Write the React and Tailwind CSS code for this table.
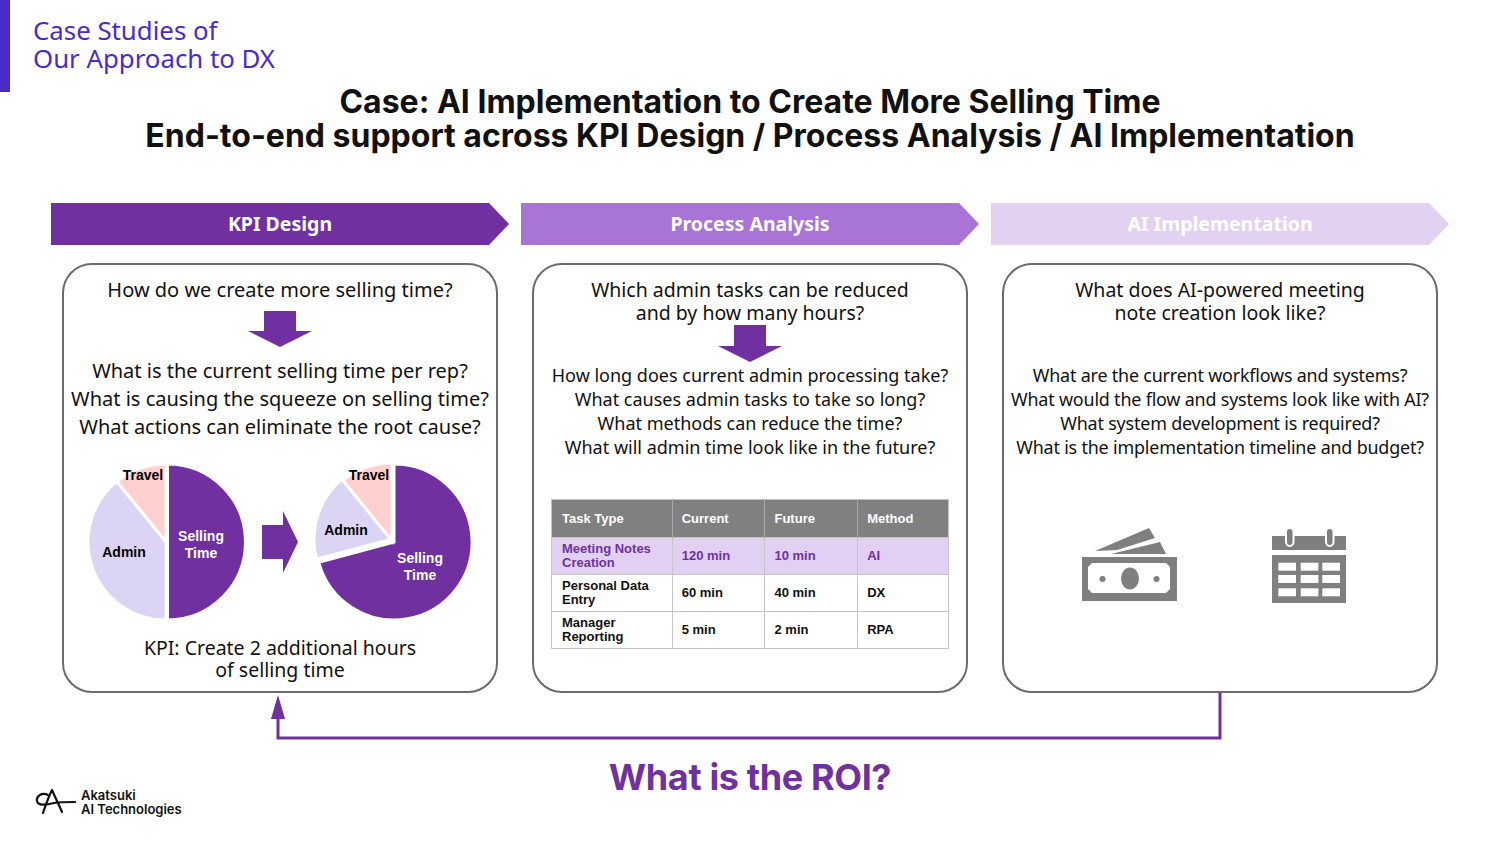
/**
 * Case study slide: KPI Design / Process Analysis / AI Implementation
 */
const rows = [
  { task: 'Meeting Notes Creation', current: '120 min', future: '10 min', method: 'AI', hl: true },
  { task: 'Personal Data Entry', current: '60 min', future: '40 min', method: 'DX' },
  { task: 'Manager Reporting', current: '5 min', future: '2 min', method: 'RPA' },
]

const DownArrow = ({ h = 36 }) => (
  <svg width="64" height={h} viewBox={`0 0 64 ${h}`} className="mx-auto block">
    <polygon points={`16,0 48,0 48,${h - 16} 64,${h - 16} 32,${h} 0,${h - 16} 16,${h - 16}`} fill="#7030a0" />
  </svg>
)

const Chevron = ({ label, className }) => (
  <div
    className={`h-[42px] w-[458px] flex items-center justify-center text-white font-bold text-[19.5px] font-['Noto_Sans',sans-serif] [clip-path:polygon(0_0,calc(100%_-_20px)_0,100%_50%,calc(100%_-_20px)_100%,0_100%)] ${className}`}
  >
    {label}
  </div>
)

const Label = ({ x, y, fill = '#000', children }) => (
  <text
    x={x}
    y={y}
    fill={fill}
    textAnchor="middle"
    dominantBaseline="central"
    fontFamily="'Liberation Sans', Arial, sans-serif"
    fontWeight="700"
    fontSize="14"
  >
    {children}
  </text>
)

const PieBefore = () => (
  <svg width="160" height="160" viewBox="0 0 160 160">
    <path d="M80 80 L80 2 A78 78 0 0 1 80 158 Z" fill="#7030a0" stroke="#fff" strokeWidth="3" transform="translate(1.5 0)" />
    <path d="M80 80 L80 158 A78 78 0 0 1 30.9 19.4 Z" fill="#dcd4f4" stroke="#fff" strokeWidth="3" />
    <path d="M80 80 L30.9 19.4 A78 78 0 0 1 80 2 Z" fill="#ffd0cf" stroke="#fff" strokeWidth="3" />
    <Label x={57} y={13}>Travel</Label>
    <Label x={115} y={74} fill="#fff">Selling</Label>
    <Label x={115} y={91} fill="#fff">Time</Label>
    <Label x={38} y={90}>Admin</Label>
  </svg>
)

const PieAfter = () => (
  <svg width="160" height="160" viewBox="0 0 160 160">
    <path d="M80 80 L80 2 A78 78 0 1 1 4.7 100.2 Z" fill="#7030a0" stroke="#fff" strokeWidth="3" />
    <path d="M80 80 L4.7 100.2 A78 78 0 0 1 30.9 19.4 Z" fill="#dcd4f4" stroke="#fff" strokeWidth="3" transform="translate(-2 -3)" />
    <path d="M80 80 L30.9 19.4 A78 78 0 0 1 80 2 Z" fill="#ffd0cf" stroke="#fff" strokeWidth="3" transform="translate(-2 -1)" />
    <Label x={55} y={13}>Travel</Label>
    <Label x={32} y={68}>Admin</Label>
    <Label x={106} y={96} fill="#fff">Selling</Label>
    <Label x={106} y={113} fill="#fff">Time</Label>
  </svg>
)

const RightArrow = () => (
  <svg width="36" height="62" viewBox="0 0 36 62">
    <polygon points="0,14 21,14 21,0 36,31 21,62 21,48 0,48" fill="#7030a0" />
  </svg>
)

const MoneyIcon = () => (
  <svg width="96" height="76" viewBox="0 0 96 76">
    <polygon points="14,24 68,1 74,11 36,23" fill="#7f7f7f" />
    <polygon points="30,27 79,15 85,27" fill="#7f7f7f" />
    <rect x="1" y="30" width="95" height="44" fill="#7f7f7f" />
    <polygon points="11,36 85,36 89,40 89,62 85,66 11,66 7,62 7,40" fill="#fff" />
    <ellipse cx="49" cy="51.5" rx="9" ry="11" fill="#7f7f7f" />
    <circle cx="21.5" cy="52" r="3" fill="#7f7f7f" />
    <circle cx="75.5" cy="52" r="3" fill="#7f7f7f" />
  </svg>
)

const CalendarIcon = () => (
  <svg width="74" height="76" viewBox="0 0 74 76">
    <rect x="0" y="9" width="74" height="14" fill="#7f7f7f" />
    <rect x="0" y="28" width="74" height="48" fill="#7f7f7f" />
    <rect x="14" y="1" width="7.5" height="18" rx="3.75" fill="#7f7f7f" stroke="#fff" strokeWidth="2" />
    <rect x="54" y="1" width="7.5" height="18" rx="3.75" fill="#7f7f7f" stroke="#fff" strokeWidth="2" />
    {[6.3, 28.7, 50.3].map((x) =>
      [35.7, 48, 61.3].map((y) => <rect key={`${x}-${y}`} x={x} y={y} width="17.7" height="8" fill="#fff" />),
    )}
  </svg>
)

const Logo = () => (
  <div className="flex items-center gap-[5px]">
    <svg width="42" height="28" viewBox="0 0 42 28" fill="none" stroke="#111" strokeWidth="2.2" strokeLinecap="round" strokeLinejoin="round">
      <path d="M9 25 C12 16 15 8 18 2 C21 9 25 17 28 24" />
      <path d="M14 7 C8 4 2 8 3 13 C4 18 12 17 20 15 C26 14 32 14 41 14" />
    </svg>
    <div className="font-['Inter',sans-serif] font-semibold text-[13px] leading-[14px] text-[#111]">
      <div>Akatsuki</div>
      <div>AI Technologies</div>
    </div>
  </div>
)

const Card = ({ children }) => (
  <div className="w-[436px] h-[430px] rounded-[30px] border-2 border-[#6b6b6b] bg-white flex flex-col items-center text-center text-[#111] font-['Noto_Sans',sans-serif]">
    {children}
  </div>
)

export default function App() {
  return (
    <div className="w-[1500px] h-[844px] bg-white overflow-hidden flex flex-col">
      {/* header */}
      <div className="flex h-[92px]">
        <div className="w-[10px] h-[92px] bg-[#4b2bc8]" />
        <div className="ml-[23px] pt-[16px] text-[25.8px] leading-[28px] text-[#4b2bc8] font-['Noto_Sans',sans-serif]">
          <div>Case Studies of</div>
          <div>Our Approach to DX</div>
        </div>
      </div>

      <div className="-mt-[7px] text-center font-['Inter',sans-serif] font-bold text-[32px] leading-[34px] text-[#111]">
        <div>Case: AI Implementation to Create More Selling Time</div>
        <div>End-to-end support across KPI Design / Process Analysis / AI Implementation</div>
      </div>

      {/* phase chevrons */}
      <div className="mt-[50px] pl-[51px] flex gap-[12px]">
        <Chevron label="KPI Design" className="bg-[#7030a0]" />
        <Chevron label="Process Analysis" className="bg-[#a874d6]" />
        <Chevron label="AI Implementation" className="bg-[#e2d1f1]" />
      </div>

      {/* cards */}
      <div className="mt-[18px] pl-[62px] flex gap-[34px]">
        <Card>
          <div className="pt-[13px] text-[20px] leading-[24px]">How do we create more selling time?</div>
          <div className="mt-[9px]">
            <DownArrow />
          </div>
          <div className="mt-[10px] text-[20px] leading-[28px]">
            <div>What is the current selling time per rep?</div>
            <div>What is causing the squeeze on selling time?</div>
            <div>What actions can eliminate the root cause?</div>
          </div>
          <div className="mt-[21px] flex items-center gap-[16px]">
            <PieBefore />
            <RightArrow />
            <PieAfter />
          </div>
          <div className="mt-[15px] text-[19.5px] leading-[22px]">
            <div>KPI: Create 2 additional hours</div>
            <div>of selling time</div>
          </div>
        </Card>

        <Card>
          <div className="pt-[13px] text-[19.5px] leading-[23px]">
            <div>Which admin tasks can be reduced</div>
            <div>and by how many hours?</div>
          </div>
          <div className="mt-[1px]">
            <DownArrow h={37} />
          </div>
          <div className="mt-[1px] text-[18px] leading-[24px]">
            <div>How long does current admin processing take?</div>
            <div>What causes admin tasks to take so long?</div>
            <div>What methods can reduce the time?</div>
            <div>What will admin time look like in the future?</div>
          </div>
          <table className="mt-[40px] w-[398px] border-collapse border border-[#c4c4c4] text-left font-['Liberation_Sans',Arial,sans-serif] font-bold text-[13px] leading-[14px]">
            <thead>
              <tr className="h-[38px] bg-[#808080] text-white">
                <th className="w-[121px] pl-[10px] border-r border-[#a9a9a9]">Task Type</th>
                <th className="w-[93px] pl-[9px] border-r border-[#a9a9a9]">Current</th>
                <th className="w-[93px] pl-[9px] border-r border-[#a9a9a9]">Future</th>
                <th className="w-[91px] pl-[9px]">Method</th>
              </tr>
            </thead>
            <tbody>
              {rows.map((r) => (
                <tr key={r.task} className={`h-[37px] border-t border-[#c4c4c4] ${r.hl ? 'bg-[#e2d0f2] text-[#7030a0]' : 'bg-white text-[#111]'}`}>
                  <td className="pl-[10px] pr-[6px] border-r border-[#c4c4c4]">{r.task}</td>
                  <td className="pl-[9px] border-r border-[#c4c4c4]">{r.current}</td>
                  <td className="pl-[9px] border-r border-[#c4c4c4]">{r.future}</td>
                  <td className="pl-[9px]">{r.method}</td>
                </tr>
              ))}
            </tbody>
          </table>
        </Card>

        <Card>
          <div className="pt-[13px] text-[19.5px] leading-[23px]">
            <div>What does AI-powered meeting</div>
            <div>note creation look like?</div>
          </div>
          <div className="mt-[39px] text-[17.9px] leading-[24px] tracking-[-0.01em]">
            <div>What are the current workflows and systems?</div>
            <div>What would the flow and systems look like with AI?</div>
            <div>What system development is required?</div>
            <div>What is the implementation timeline and budget?</div>
          </div>
          <div className="mt-[68px] pr-[13px] flex items-end gap-[95px]">
            <MoneyIcon />
            <CalendarIcon />
          </div>
        </Card>
      </div>

      {/* ROI feedback connector */}
      <svg width="1500" height="52" viewBox="0 0 1500 52" className="block shrink-0">
        <path d="M1220 0 L1220 45 L278 45 L278 24" fill="none" stroke="#7030a0" strokeWidth="3" />
        <polygon points="278,2 271,26 285,26" fill="#7030a0" />
      </svg>

      <div className="mt-[12px] h-[60px] grid grid-cols-[1fr_auto_1fr]">
        <div className="self-end pl-[34px] pb-[1px]">
          <Logo />
        </div>
        <div className="self-start text-[36px] leading-[40px] font-bold font-['Inter',sans-serif] tracking-[-0.01em] text-[#7030a0]">
          What is the ROI?
        </div>
        <div />
      </div>
    </div>
  )
}
